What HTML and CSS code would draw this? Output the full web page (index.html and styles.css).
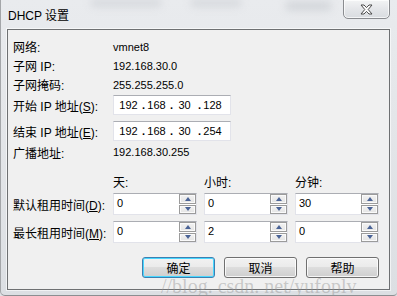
FILE: index.html
```html
<!DOCTYPE html>
<html lang="zh-CN">
<head>
  <meta charset="UTF-8">
  <title>DHCP 设置</title>
  <link rel="stylesheet" href="styles.css">
</head>
<body>
  <div class="window">
    <div class="titlebar">
      <span class="title">DHCP 设置</span>
      <span class="glass glass-a"></span>
      <span class="glass glass-b"></span>
      <span class="glass glass-c"></span>
      <button class="close-btn" aria-label="关闭">
        <svg width="13" height="11" viewBox="0 0 13 11">
          <polygon points="1,1 4,1 6.5,3.6 9,1 12,1 8.2,5.5 12,10 9,10 6.5,7.4 4,10 1,10 4.8,5.5"
                   fill="#fff" stroke="#4a4a4a" stroke-width="1" stroke-linejoin="round"/>
        </svg>
      </button>
    </div>

    <div class="panel">
      <div class="row info"><span class="label">网络:</span><span class="value">vmnet8</span></div>
      <div class="row info"><span class="label">子网 IP:</span><span class="value">192.168.30.0</span></div>
      <div class="row info"><span class="label">子网掩码:</span><span class="value">255.255.255.0</span></div>

      <div class="row ip-row first">
        <span class="label">开始 IP 地址(<u>S</u>):</span>
        <div class="ip-box">
          <span class="seg">192</span><span class="dot">.</span>
          <span class="seg">168</span><span class="dot">.</span>
          <span class="seg">30</span><span class="dot">.</span>
          <span class="seg">128</span>
        </div>
      </div>
      <div class="row ip-row">
        <span class="label">结束 IP 地址(<u>E</u>):</span>
        <div class="ip-box">
          <span class="seg">192</span><span class="dot">.</span>
          <span class="seg">168</span><span class="dot">.</span>
          <span class="seg">30</span><span class="dot">.</span>
          <span class="seg">254</span>
        </div>
      </div>
      <div class="row info broadcast"><span class="label">广播地址:</span><span class="value">192.168.30.255</span></div>

      <div class="row heads">
        <span class="label"></span>
        <span class="col">天:</span>
        <span class="col">小时:</span>
        <span class="col">分钟:</span>
      </div>

      <div class="row spin-row first">
        <span class="label">默认租用时间(<u>D</u>):</span>
        <div class="spin"><span class="spin-field">0</span><span class="spin-btns"><span class="up"></span><span class="down"></span></span></div>
        <div class="spin"><span class="spin-field">0</span><span class="spin-btns"><span class="up"></span><span class="down"></span></span></div>
        <div class="spin"><span class="spin-field">30</span><span class="spin-btns"><span class="up"></span><span class="down"></span></span></div>
      </div>
      <div class="row spin-row">
        <span class="label">最长租用时间(<u>M</u>):</span>
        <div class="spin"><span class="spin-field">0</span><span class="spin-btns"><span class="up"></span><span class="down"></span></span></div>
        <div class="spin"><span class="spin-field">2</span><span class="spin-btns"><span class="up"></span><span class="down"></span></span></div>
        <div class="spin"><span class="spin-field">0</span><span class="spin-btns"><span class="up"></span><span class="down"></span></span></div>
      </div>

      <div class="actions">
        <button class="btn default">确定</button>
        <button class="btn">取消</button>
        <button class="btn">帮助</button>
      </div>
    </div>

    <div class="watermark">//blog. csdn. net/yufoplv</div>
  </div>
</body>
</html>
```

FILE: styles.css
```css
body {
  margin: 0;
  background: #dfe2e6;
  font-family: "Liberation Sans", "Noto Sans CJK SC", sans-serif;
  font-size: 12px;
  color: #000;
}
.window {
  position: relative;
  width: 397px;
  height: 296px;
  box-sizing: border-box;
  background: linear-gradient(to bottom, #e9ebee 0%, #e4e6e9 40%, #dcdfe3 100%);
  border-left: 1px solid #a4a6a9;
  border-bottom: 1px solid #8c8e91;
  border-radius: 0 0 4px 5px;
  overflow: hidden;
}
.titlebar {
  position: relative;
  height: 29px;
}
.title {
  position: absolute;
  left: 7px;
  top: 6px;
  font-size: 12px;
}
.glass {
  position: absolute;
  background: #bfc3c8;
  filter: blur(4px);
  opacity: 0.6;
}
.glass-a { left: 90px; top: 0; width: 70px; height: 6px; }
.glass-b { left: 190px; top: 0; width: 50px; height: 6px; }
.glass-c { left: 285px; top: 2px; width: 45px; height: 8px; }
.close-btn {
  position: absolute;
  left: 342px;
  top: -1px;
  width: 47px;
  height: 20px;
  padding: 0;
  border: 1px solid #8a8c90;
  border-radius: 0 0 5px 5px;
  background: linear-gradient(to bottom, #f3f4f5, #e4e6e9 50%, #d9dce0);
  box-shadow: inset 0 0 0 1px rgba(255,255,255,0.7);
  display: flex;
  align-items: center;
  justify-content: center;
}
.close-btn svg { margin-top: 1px; }

.panel {
  margin: 0 7px 0 6px;
  height: 261px;
  box-sizing: border-box;
  border: 1px solid #6e7072;
  background: #f0f0f0;
  padding: 7px 0 0 5px;
  box-shadow: 0 0 0 1px rgba(255,255,255,0.6);
}
.row {
  display: flex;
  align-items: center;
}
.label {
  width: 100px;
  flex: none;
  white-space: nowrap;
}
.label u { text-underline-offset: 1px; }
.value {
  font-size: 11px;
}
.info { height: 19px; }
.broadcast { height: 22px; }

.ip-row { height: 20px; margin-top: 6px; }
.ip-row.first { margin-top: 1px; }
.ip-box {
  width: 118px;
  height: 20px;
  box-sizing: border-box;
  background: #fff;
  border: 1px solid #e2e3ea;
  border-top-color: #abadb3;
  display: flex;
  align-items: center;
  padding-left: 3px;
  font-size: 11px;
}
.seg {
  width: 23px;
  text-align: center;
}
.dot {
  width: 5px;
  text-align: right;
  font-weight: bold;
}

.heads {
  height: 19px;
  margin-top: 9px;
  gap: 7px;
}
.heads .label { width: 93px; }
.col { width: 84px; }

.spin-row { height: 22px; margin-top: 6px; gap: 7px; }
.spin-row.first { margin-top: 2px; }
.spin-row .label { width: 93px; }
.spin {
  width: 84px;
  height: 22px;
  box-sizing: border-box;
  background: #fff;
  border: 1px solid #e2e3ea;
  border-top-color: #abadb3;
  display: flex;
}
.spin-field {
  flex: 1;
  padding: 3px 0 0 3px;
  font-size: 11px;
}
.spin-btns {
  width: 17px;
  display: flex;
  flex-direction: column;
  gap: 1px;
}
.spin-btns span {
  flex: 1;
  border: 1px solid #9b9b9b;
  box-shadow: inset 0 0 0 1px #fafafa;
  background: linear-gradient(to bottom, #f2f2f2, #e4e4e4);
  display: flex;
  align-items: center;
  justify-content: center;
}
.spin-btns span::before {
  content: "";
  width: 0;
  height: 0;
  border-left: 3.5px solid transparent;
  border-right: 3.5px solid transparent;
}
.spin-btns .up::before { border-bottom: 4px solid #4a6396; }
.spin-btns .down::before { border-top: 4px solid #4a6396; }

.actions {
  display: flex;
  justify-content: flex-end;
  gap: 9px;
  margin-top: 14px;
  padding-right: 10px;
}
.btn {
  width: 73px;
  height: 21px;
  padding: 0;
  font-family: "Liberation Sans", "Noto Sans CJK SC", sans-serif;
  font-size: 12px;
  color: #000;
  border: 1px solid #707070;
  border-radius: 3px;
  background: linear-gradient(to bottom, #f2f2f2 0%, #ebebeb 45%, #dddddd 50%, #cfcfcf 100%);
  box-shadow: inset 0 0 0 1px rgba(255,255,255,0.8);
}
.btn.default {
  border-color: #3c7fb1;
  box-shadow: inset 0 0 0 1px #48d7ff;
}

.watermark {
  position: absolute;
  left: 160px;
  top: 276px;
  font-family: "Liberation Serif", serif;
  font-size: 20px;
  line-height: 1;
  color: rgba(150,150,150,0.45);
  white-space: nowrap;
}
```
